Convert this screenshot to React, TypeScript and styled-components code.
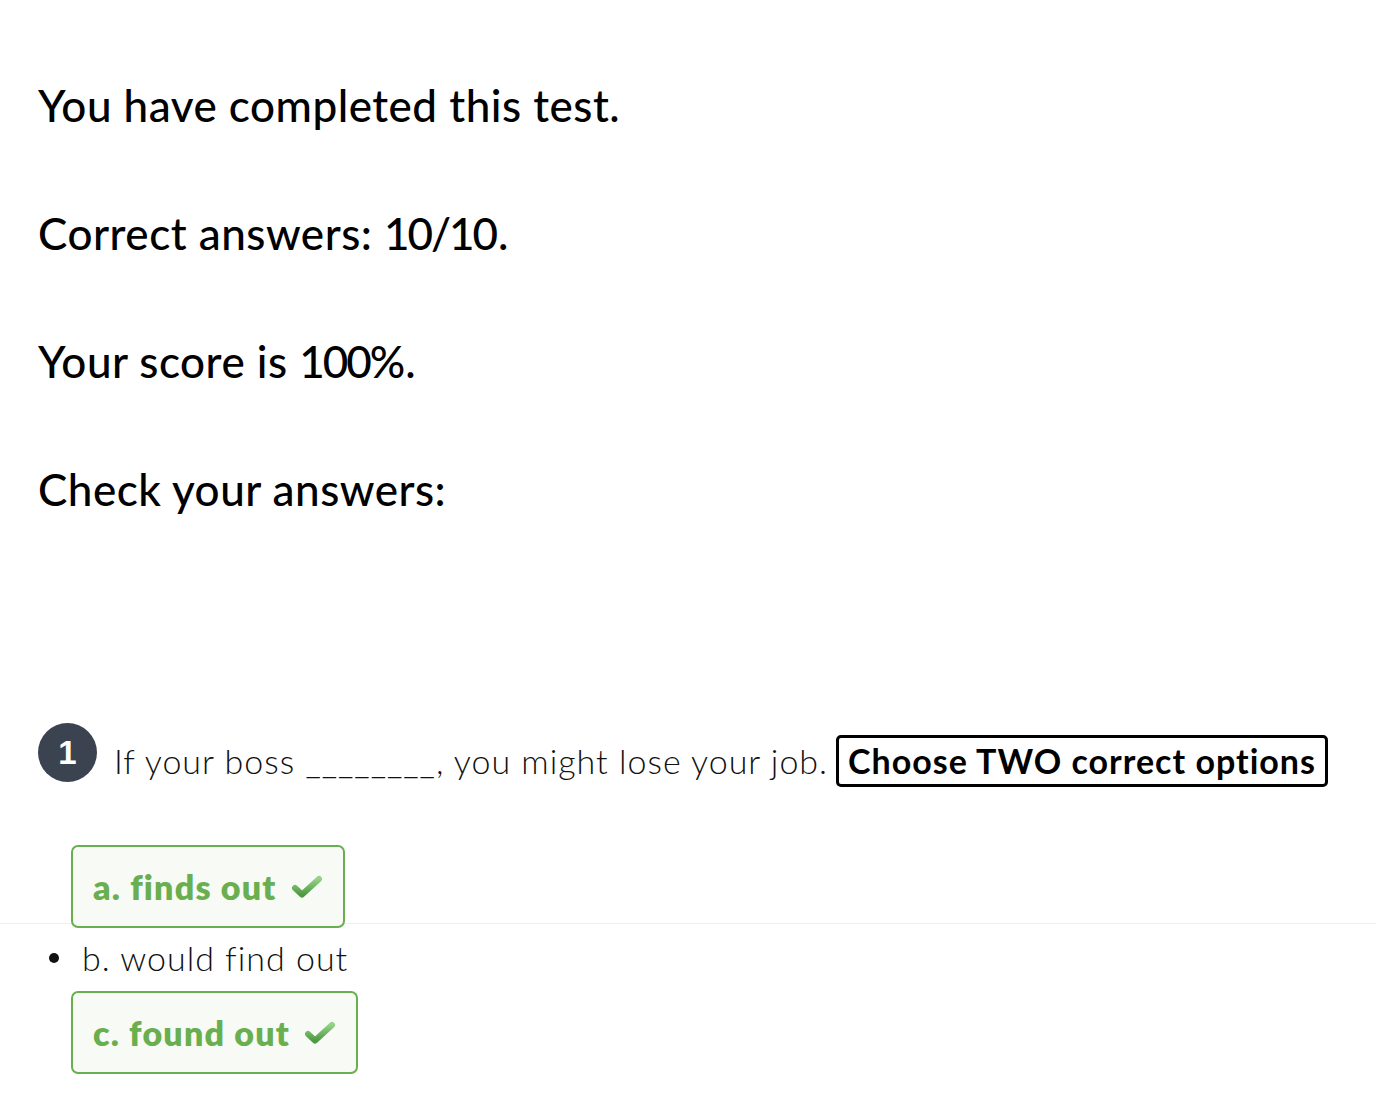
import React from "react";
import styled, { createGlobalStyle } from "styled-components";

const GlobalStyle = createGlobalStyle`
  html, body { margin: 0; padding: 0; background: #ffffff; }
  body { font-family: "Lato", "Noto Sans", sans-serif; color: #111; }
`;

const Page = styled.main`
  display: flex;
  flex-direction: column;
  padding: 78px 0 0 38px;
`;

const Summary = styled.section`
  display: flex;
  flex-direction: column;
  gap: 73px;
`;

const Heading = styled.p`
  margin: 0;
  font-size: 44px;
  line-height: 55px;
  font-weight: 500;
  letter-spacing: 0.5px;
  color: #000;
`;

const Figures = styled.span`
  letter-spacing: -2px;
  margin-right: 2px;
`;

const Question = styled.div`
  display: flex;
  align-items: flex-start;
  margin-top: 206px;
  padding-right: 40px;
`;

const Number = styled.span`
  flex: none;
  width: 59px;
  height: 59px;
  border-radius: 50%;
  background: #3c4350;
  color: #fff;
  display: flex;
  align-items: center;
  justify-content: center;
  font-family: "Liberation Sans", Arial, sans-serif;
  font-weight: 700;
  font-size: 33px;
  margin-right: 17px;
`;

const Prompt = styled.p`
  margin: 12px 0 0;
  font-size: 34px;
  line-height: 52px;
  font-weight: 300;
  letter-spacing: 1px;
  color: #111;
`;

const Instruction = styled.span`
  display: inline-block;
  border: 3px solid #000;
  border-radius: 5px;
  padding: 0 9px;
  margin-left: 8px;
  font-weight: 700;
  line-height: 46px;
  letter-spacing: 1px;
  color: #000;
`;

const Options = styled.ul`
  list-style: none;
  margin: 58px 0 0;
  padding: 0;
  display: flex;
  flex-direction: column;
`;

const Option = styled.li<{ $divider?: boolean }>`
  display: flex;
  border-bottom: ${(p) => (p.$divider ? "1px solid #efefef" : "none")};
  margin-left: -38px;
  padding-left: 71px;
`;

const Correct = styled.span<{ $overlap?: boolean }>`
  position: relative;
  display: inline-flex;
  align-items: center;
  gap: 14px;
  height: 79px;
  padding: 0 20px;
  border: 2px solid #6aaf4f;
  border-radius: 7px;
  background: #f8faf6;
  color: #6aaf4f;
  font-size: 34px;
  font-weight: 800;
  letter-spacing: 1.2px;
  margin-bottom: ${(p) => (p.$overlap ? "-5px" : "0")};
`;

const Plain = styled.li`
  display: flex;
  align-items: center;
  font-size: 34px;
  line-height: 67px;
  font-weight: 300;
  letter-spacing: 1px;
  color: #111;
  padding-left: 11px;
  &::before {
    content: "";
    width: 10px;
    height: 10px;
    border-radius: 50%;
    background: #111;
    margin-right: 23px;
  }
`;

const Check = () => (
  <svg width="32" height="25" viewBox="0 0 32 25" aria-hidden="true">
    <defs>
      <linearGradient id="chk" x1="0" y1="0" x2="0" y2="1">
        <stop offset="0" stopColor="#94d284" />
        <stop offset="1" stopColor="#4e9a44" />
      </linearGradient>
    </defs>
    <path
      d="M4 14 L11 20.5 L28 5"
      fill="none"
      stroke="url(#chk)"
      strokeWidth="6"
      strokeLinecap="round"
      strokeLinejoin="round"
    />
  </svg>
);

export default function App() {
  return (
    <>
      <GlobalStyle />
      <Page>
        <Summary>
          <Heading>You have completed this test.</Heading>
          <Heading>
            Correct answers: <Figures>10/10</Figures>.
          </Heading>
          <Heading>
            Your score is <Figures>100%</Figures>.
          </Heading>
          <Heading>Check your answers:</Heading>
        </Summary>
        <Question>
          <Number>1</Number>
          <Prompt>
            If your boss ________, you might lose your job.
            <Instruction>Choose TWO correct options</Instruction>
          </Prompt>
        </Question>
        <Options>
          <Option $divider>
            <Correct $overlap>
              a. finds out <Check />
            </Correct>
          </Option>
          <Plain>b. would find out</Plain>
          <Option>
            <Correct>
              c. found out <Check />
            </Correct>
          </Option>
        </Options>
      </Page>
    </>
  );
}
